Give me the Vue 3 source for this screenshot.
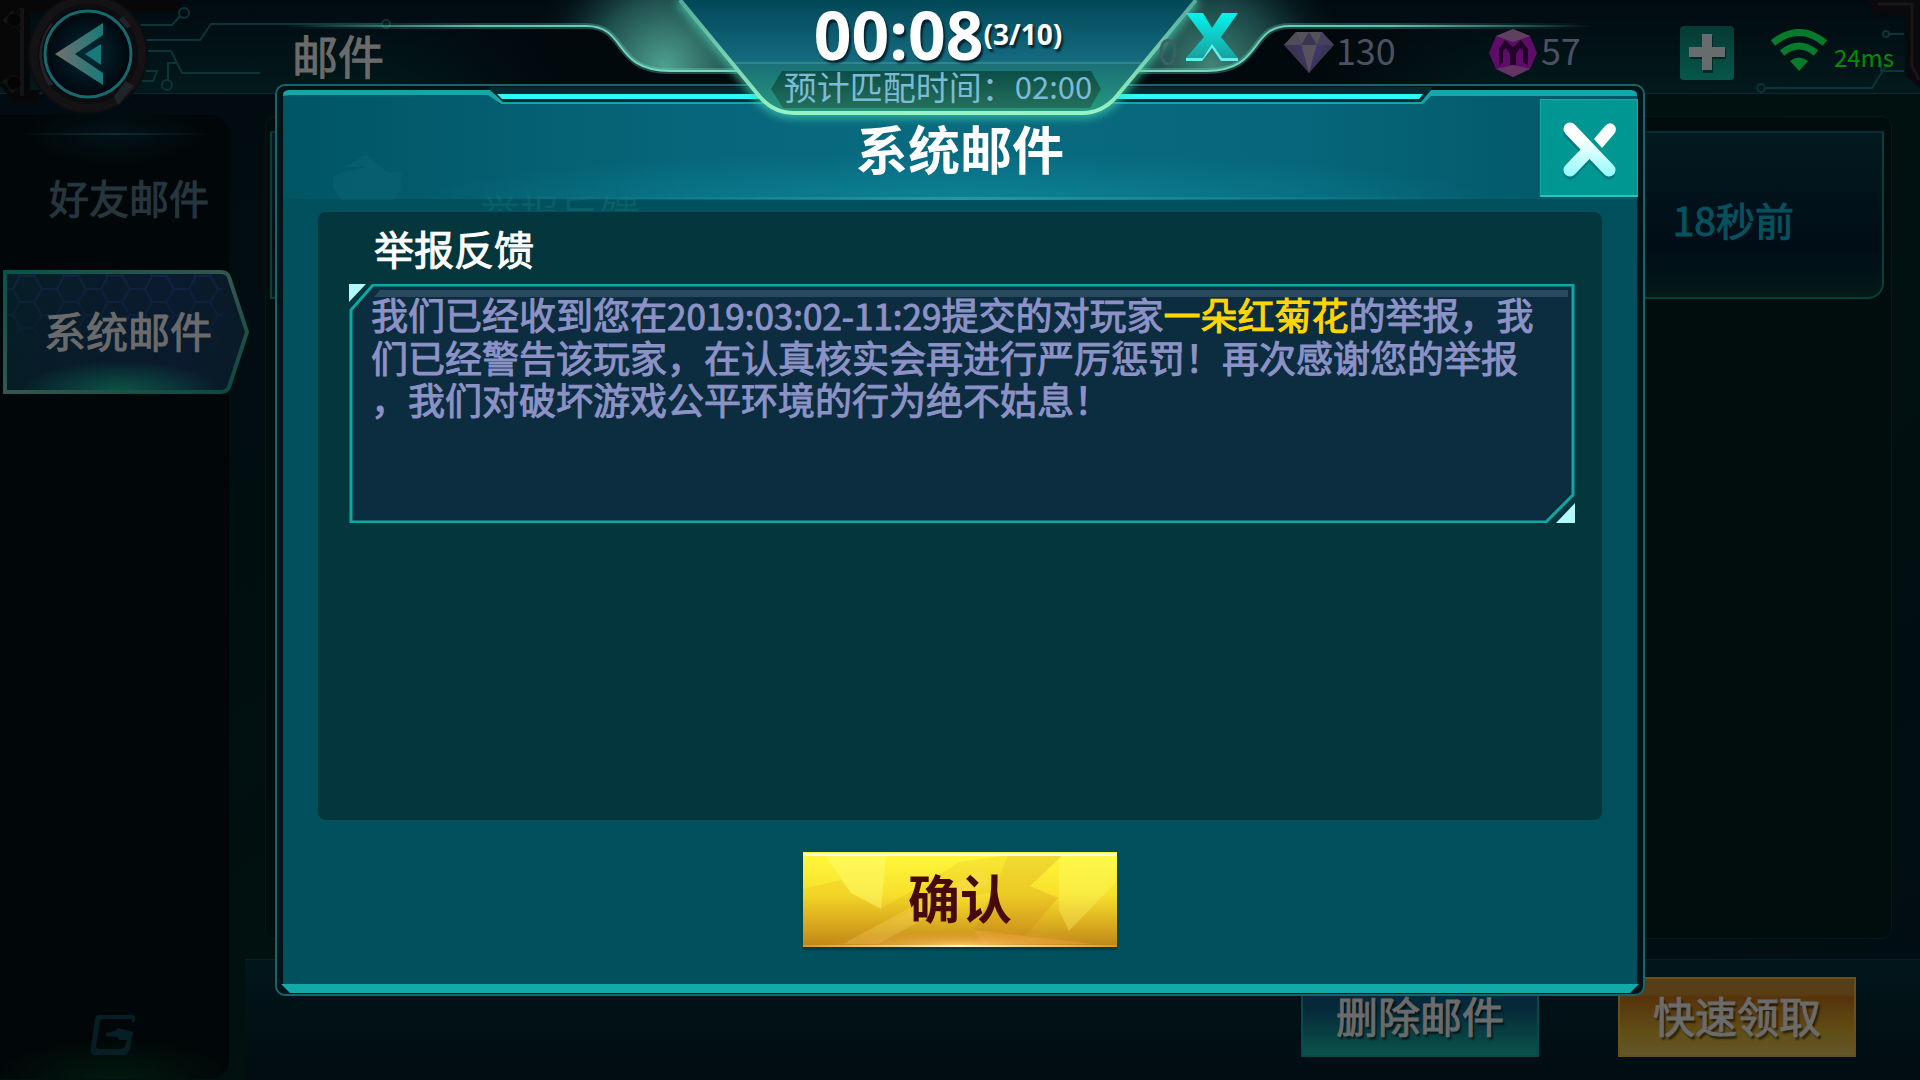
<script setup>
import { ref } from 'vue'

const abas = ['好友邮件', '系统邮件']
const abaAtiva = ref('系统邮件')

const mail = {
  title: '举报反馈',
  before: '我们已经收到您在',
  date: '2019:03:02-11:29',
  middle: '提交的对玩家',
  player: '一朵红菊花',
  after: '的举报，我们已经警告该玩家，在认真核实会再进行严厉惩罚！再次感谢您的举报，我们对破坏游戏公平环境的行为绝不姑息！'
}
</script>

<template>
  <div class="tela">
    <header class="topo">
      <svg class="circuito" viewBox="0 0 480 110" aria-hidden="true">
        <path d="M0 0H183L178 11H30V90H40L36 103H14L0 85Z" fill="#070708" />
        <path d="M22 8V96M4 22L14 12M4 80L14 92" stroke="#121517" stroke-width="4" fill="none" />
        <circle cx="14" cy="20" r="7" fill="#040405" stroke="#111" />
        <circle cx="14" cy="83" r="7" fill="#040405" stroke="#111" />
        <g fill="none" stroke="#0a3638" stroke-width="2">
          <path d="M130 25H172L180 16" />
          <circle cx="184" cy="13" r="5" />
          <path d="M145 40H200L211 24H381" />
          <circle cx="386" cy="24" r="4" />
          <path d="M145 51H171L182 73H260M176 63H168V80M146 71H157L153 81H142" />
          <circle cx="167" cy="85" r="5" />
        </g>
      </svg>

      <button class="voltar" aria-label="返回">
        <svg viewBox="0 0 124 124" aria-hidden="true">
          <defs>
            <linearGradient id="seta" x1="0" x2="1">
              <stop offset="0" stop-color="#746f70" />
              <stop offset="1" stop-color="#167a78" />
            </linearGradient>
            <radialGradient id="fundoSeta">
              <stop offset="0" stop-color="#042b38" />
              <stop offset="1" stop-color="#01060c" />
            </radialGradient>
          </defs>
          <circle cx="62" cy="62" r="60" fill="#0c0d0f" />
          <path d="M28 100A51 51 0 0 0 101 96" fill="none" stroke="#17484b" stroke-width="2" />
          <circle cx="62" cy="62" r="54" fill="none" stroke="#141214" stroke-width="8" />
          <path d="M33 37L25 31A52 52 0 0 0 23 94L31 91A60 60 0 0 1 33 37ZM97 24L105 34L99 37L92 29ZM100 89L108 94L92 113L88 104Z" fill="#20242a" />
          <circle cx="62" cy="62" r="46" fill="#060a0c" />
          <circle cx="62" cy="62" r="43" fill="url(#fundoSeta)" stroke="#16696f" stroke-width="3" />
          <path d="M77 31L29 62L77 93V81L49 62L77 43Z" fill="url(#seta)" />
          <path d="M75 52L59 62L75 73Z" fill="#167a78" />
        </svg>
      </button>

      <h1 class="topo-titulo">邮件</h1>

      <div class="moedas">
        <span class="moeda moeda-zero"><span>0</span></span>
        <span class="moeda">
          <svg class="diamante" viewBox="0 0 50 41" aria-hidden="true">
            <path d="M12 0H38L50 13L25 41L0 13Z" fill="#3a3650" />
            <path d="M12 0L17 13L25 0L33 13L38 0Z" fill="#55525a" />
            <path d="M17 13H33L25 41Z" fill="#57525c" />
            <path d="M0 13L12 0L17 13Z" fill="#514d58" />
            <path d="M50 13L38 0L33 13Z" fill="#45405c" />
            <path d="M8 13H17L25 41Z" fill="#3b3560" />
            <path d="M42 13H33L25 41Z" fill="#3d3666" />
          </svg>
          <span>130</span>
        </span>
        <span class="moeda moeda-gema">
          <svg class="gema" viewBox="0 0 48 48" aria-hidden="true">
            <path d="M24 0L41 7L48 24L41 40L24 48L7 40L0 24L7 7Z" fill="#5d0c68" />
            <path d="M24 0L41 7L24 13L7 7Z" fill="#5e415f" />
            <path d="M7 40L24 36L41 40L24 48Z" fill="#623562" />
            <path d="M10 37V20L16 11L24 18L32 11L39 20V37L34 33V22L31 19L27 25V36H21V25L17 19L14 22V33Z" fill="#230229" />
          </svg>
          <span>57</span>
        </span>
        <button class="mais" aria-label="添加">
          <svg viewBox="0 0 54 54" aria-hidden="true">
            <path d="M23 10H33V23H46V33H33V47H23V33H10V23H23Z" fill="#022a25" />
            <path d="M22 8H32V21H45V31H32V44H22V31H9V21H22Z" fill="#696c6e" />
          </svg>
        </button>
        <svg class="wifi" viewBox="0 0 58 42" aria-hidden="true">
          <g fill="none" stroke="#087a2c" stroke-width="7">
            <path d="M3 14Q29 -7 55 14" />
            <path d="M12 24Q29 10 46 24" />
          </g>
          <path d="M20 32Q29 25 38 32L29 42Z" fill="#087a2c" />
        </svg>
        <span class="ping">24ms</span>
      </div>

      <svg class="canto" viewBox="0 0 180 100" aria-hidden="true">
        <path d="M126 0H180V88L165 75V16H148L134 12Z" fill="#0a090b" />
        <path d="M138 4H172V66L179 80" fill="none" stroke="#1a1618" stroke-width="3" />
        <g fill="none" stroke="#0a3638" stroke-width="2">
          <circle cx="146" cy="34" r="3" />
          <path d="M149 34H164M141 61V71H164M147 64L132 88H26" />
          <circle cx="21" cy="88" r="4" />
        </g>
      </svg>
    </header>

    <main class="corpo">
      <nav class="lateral">
        <button
          v-for="aba in abas"
          :key="aba"
          class="aba"
          :class="{ ativa: aba === abaAtiva }"
          @click="abaAtiva = aba"
        >
          <svg v-if="aba === abaAtiva" viewBox="0 0 250 128" aria-hidden="true">
            <defs>
              <linearGradient id="abaBorda" x1="0" y1="0" x2="1" y2="1">
                <stop offset="0" stop-color="#07534a" />
                <stop offset="0.5" stop-color="#35564f" />
                <stop offset="1" stop-color="#07493f" />
              </linearGradient>
              <linearGradient id="abaFundo" x1="0" y1="0" x2="1" y2="0">
                <stop offset="0" stop-color="#061d26" />
                <stop offset="0.7" stop-color="#0b1a2e" />
                <stop offset="1" stop-color="#081b25" />
              </linearGradient>
              <radialGradient id="abaLuz" cx="0.5" cy="1" r="0.5">
                <stop offset="0" stop-color="#0c5446" />
                <stop offset="1" stop-color="#0c5446" stop-opacity="0" />
              </radialGradient>
              <pattern id="hex" width="44" height="26" patternUnits="userSpaceOnUse" patternTransform="translate(5 8)">
                <path d="M0 13H8L15 0H29L37 13H44M8 13L15 26H29L37 13" fill="none" stroke="#1b2859" stroke-width="2" />
              </pattern>
              <linearGradient id="some" x1="0" y1="0" x2="0" y2="1">
                <stop offset="0" stop-color="#fff" />
                <stop offset="0.7" stop-color="#000" />
              </linearGradient>
              <mask id="mascara"><rect width="250" height="128" fill="url(#some)" /></mask>
            </defs>
            <path d="M5 4H221Q227 4 229 9L247 64L229 119Q227 124 221 124H5Z" fill="url(#abaFundo)" />
            <rect x="5" y="4" width="218" height="100" fill="url(#hex)" opacity="0.6" mask="url(#mascara)" />
            <rect x="20" y="62" width="200" height="61" fill="url(#abaLuz)" />
            <path d="M5 4H221Q227 4 229 9L247 64L229 119Q227 124 221 124H5Z" fill="none" stroke="url(#abaBorda)" stroke-width="4" />
          </svg>
          <span>{{ aba }}</span>
        </button>
        <svg class="marca" viewBox="0 0 46 40" aria-hidden="true">
          <path d="M8 0H42Q46 0 45 6L42 8V4H13Q11 4 10 6L6 31Q6 34 9 34H30Q34 34 35 31L37 25H30L27 22L16 21V18L25 16L28 13L43 17L40 33Q39 40 33 40H5Q0 40 1 33L5 4Q6 0 8 0Z" fill="#071e26" />
        </svg>
      </nav>

      <section class="lista">
        <article class="item">
          <time class="item-tempo">18秒前</time>
        </article>
      </section>
    </main>

    <footer class="rodape">
      <button class="btn btn-apagar">删除邮件</button>
      <button class="btn btn-receber">快速领取</button>
    </footer>

    <div class="modal" role="dialog" aria-labelledby="modal-titulo">
      <svg class="moldura" viewBox="0 0 1370 912" preserveAspectRatio="none" aria-hidden="true">
        <defs>
          <linearGradient id="cabeca" x1="0" y1="0" x2="1" y2="0">
            <stop offset="0" stop-color="#005563" />
            <stop offset="0.3" stop-color="#07667b" />
            <stop offset="0.5" stop-color="#096a80" />
            <stop offset="0.75" stop-color="#07667b" />
            <stop offset="1" stop-color="#005563" />
          </linearGradient>
          <radialGradient id="brilho" cx="0.5" cy="1" r="0.5">
            <stop offset="0" stop-color="#0f8b9c" />
            <stop offset="1" stop-color="#0f8b9c" stop-opacity="0" />
          </radialGradient>
          <linearGradient id="linha" x1="0" x2="1">
            <stop offset="0.2" stop-color="#1e8d9c" stop-opacity="0" />
            <stop offset="0.5" stop-color="#2597a5" />
            <stop offset="0.88" stop-color="#1e8d9c" stop-opacity="0" />
          </linearGradient>
        </defs>
        <rect x="1" y="1" width="1368" height="910" rx="9" fill="#021318" stroke="#15656d" stroke-width="2" />
        <path d="M8 8H1362V901H8Z" fill="#00515d" />
        <path d="M8 11H1362V115H8Z" fill="url(#cabeca)" />
        <path d="M150 20H1220V115H150Z" fill="url(#brilho)" opacity="0.7" />
        <path d="M8 113H1362V116H8Z" fill="url(#linha)" />
        <!-- ghost of the mail row behind the panel -->
        <path d="M58 104V92L68 88L92 83H70L88 72L93 72L112 88H126V104L118 116H66Z" fill="#17717a" opacity="0.25" />
        <text class="fantasma" x="205" y="145">{{ mail.title }}</text>
        <path d="M214 3H1158L1147 20H224Z" fill="#032a33" />
        <path d="M8 12Q8 6 14 6H215L228 18H1146L1156 6H1356Q1362 6 1362 12H1156L1148 20H226L213 11H14Z" fill="#14a6a8" />
        <path d="M222 10H1148L1144 15H227Z" fill="#2afafb" />
        <path d="M6 900H1364L1355 909H15Z" fill="#14a9a9" />
      </svg>

      <div class="modal-topo">
        <h2 id="modal-titulo">系统邮件</h2>
        <button class="fechar" aria-label="关闭">
          <svg viewBox="0 0 96 96" aria-hidden="true">
            <defs>
              <linearGradient id="xis" x1="0" y1="22" x2="0" y2="77" gradientUnits="userSpaceOnUse">
                <stop offset="0.3" stop-color="#fff" />
                <stop offset="1" stop-color="#8ffcff" />
              </linearGradient>
            </defs>
            <g fill="none" stroke-width="13" stroke-linecap="round">
              <path d="M29 33L68 73M48 53L29 73" stroke="#057b7d" />
              <path d="M29 29L68 70M48 50L29 70" stroke="url(#xis)" />
            </g>
            <path d="M53 39L64 26Q69 21 73 25Q77 29 73 34L61 48Z" fill="#fff" />
          </svg>
        </button>
      </div>

      <div class="painel">
        <h3>{{ mail.title }}</h3>
        <div class="mensagem">
          <svg viewBox="0 0 1226 239" preserveAspectRatio="none" aria-hidden="true">
            <path d="M24 1H1224V211L1197 238H2V26Z" fill="#0c2c3f" stroke="#0fa8a1" stroke-width="3" />
            <path d="M31 6H1219V13H25Z" fill="#29495f" />
            <path d="M0 0H17L0 18ZM1226 219V239H1207Z" fill="#b2f8fd" />
          </svg>
          <p>{{ mail.before }}<span class="data">{{ mail.date }}</span>{{ mail.middle }}<span class="jogador">{{ mail.player }}</span>{{ mail.after }}</p>
        </div>
      </div>

      <button class="btn-confirmar">
        <svg viewBox="0 0 314 95" preserveAspectRatio="none" aria-hidden="true">
          <defs>
            <radialGradient id="ouroLuz" cx="0.5" cy="1" r="0.5">
              <stop offset="0" stop-color="#ffc868" />
              <stop offset="1" stop-color="#e8942c" stop-opacity="0" />
            </radialGradient>
            <linearGradient id="fio" x1="0" x2="1">
              <stop offset="0" stop-color="#d99a20" />
              <stop offset="0.5" stop-color="#fff8d8" />
              <stop offset="1" stop-color="#d99a20" />
            </linearGradient>
          </defs>
          <path d="M22 3H83L78 57L48 41Z" fill="#ffff80" opacity="0.4" />
          <path d="M0 37L38 28L48 41L78 57L157 10L205 3L190 40L120 55L40 92H0Z" fill="#d18a00" opacity="0.13" />
          <path d="M40 92L176 18L188 30L75 92Z" fill="#ffe070" opacity="0.25" />
          <path d="M205 3H260L227 34L255 46L215 92L171 78L190 40Z" fill="#c87a10" opacity="0.22" />
          <path d="M260 3H313V30L266 79L256 58V5Z" fill="#ffff70" opacity="0.3" />
          <path d="M171 78L290 92H180Z" fill="#ffb050" opacity="0.3" />
          <rect x="10" y="62" width="294" height="32" fill="url(#ouroLuz)" />
          <rect y="1" width="314" height="3" fill="#fffde0" />
          <rect y="93" width="314" height="2" fill="url(#fio)" />
        </svg>
        <span>确认</span>
      </button>
    </div>

    <div class="fila">
      <svg viewBox="286 0 1304 130" aria-hidden="true">
        <defs>
          <linearGradient id="asa" x1="286" x2="938" y1="0" y2="0" gradientUnits="userSpaceOnUse" spreadMethod="reflect">
            <stop offset="0" stop-color="#5cc0ae" stop-opacity="0" />
            <stop offset="0.3" stop-color="#5cc0ae" />
            <stop offset="0.6" stop-color="#74dcc4" />
          </linearGradient>
          <linearGradient id="sombra" x1="390" x2="938" y1="0" y2="0" gradientUnits="userSpaceOnUse" spreadMethod="reflect">
            <stop offset="0" stop-color="#01060a" stop-opacity="0" />
            <stop offset="0.3" stop-color="#01060a" stop-opacity="0.8" />
          </linearGradient>
          <radialGradient id="asaE" cx="665" cy="66" r="135" gradientUnits="userSpaceOnUse">
            <stop offset="0" stop-color="#4fa08f" />
            <stop offset="0.5" stop-color="#1f4f4e" />
            <stop offset="1" stop-color="#04171f" stop-opacity="0" />
          </radialGradient>
          <radialGradient id="asaD" cx="1211" cy="66" r="135" gradientUnits="userSpaceOnUse">
            <stop offset="0" stop-color="#4fa08f" stop-opacity="0.8" />
            <stop offset="0.5" stop-color="#1f4f4e" stop-opacity="0.8" />
            <stop offset="1" stop-color="#04171f" stop-opacity="0" />
          </radialGradient>
          <linearGradient id="corpoFila" x1="0" y1="0" x2="0" y2="1">
            <stop offset="0" stop-color="#014858" />
            <stop offset="0.52" stop-color="#15697e" />
            <stop offset="0.56" stop-color="#1a6f76" />
            <stop offset="1" stop-color="#279a80" />
          </linearGradient>
          <linearGradient id="borda" x1="0" y1="0" x2="0" y2="1">
            <stop offset="0" stop-color="#54a99d" />
            <stop offset="1" stop-color="#96f3c4" />
          </linearGradient>
          <linearGradient id="placa" x1="0" y1="0" x2="0" y2="1">
            <stop offset="0" stop-color="#0b4e49" />
            <stop offset="1" stop-color="#246f5b" />
          </linearGradient>
          <linearGradient id="xisFila" x1="0" y1="0" x2="0" y2="1">
            <stop offset="0" stop-color="#05f3ec" />
            <stop offset="1" stop-color="#1b9c9a" />
          </linearGradient>
          <filter id="luz" x="-10%" y="-30%" width="120%" height="160%">
            <feGaussianBlur stdDeviation="5" />
          </filter>
        </defs>
        <path d="M390 26H586C628 26 612 71 670 71H738L748 84H390ZM1486 26H1290C1248 26 1264 71 1206 71H1138L1128 84H1486Z" fill="url(#sombra)" />
        <path d="M430 0H680L738 71H670C612 71 628 26 586 26H430Z" fill="url(#asaE)" />
        <path d="M1446 0H1196L1138 71H1206C1264 71 1248 26 1290 26H1446Z" fill="url(#asaD)" />
        <path d="M286 26H586C628 26 612 71 670 71H738M1590 26H1290C1248 26 1264 71 1206 71H1138" fill="none" stroke="url(#asa)" stroke-width="6" opacity="0.3" />
        <path d="M286 26H586C628 26 612 71 670 71H738M1590 26H1290C1248 26 1264 71 1206 71H1138" fill="none" stroke="url(#asa)" stroke-width="2" />
        <path d="M680 0L760 97Q774 113 794 113H1082Q1102 113 1116 97L1196 0" fill="none" stroke="#4ad6b0" stroke-width="9" opacity="0.8" filter="url(#luz)" />
        <path d="M680 0L760 97Q774 113 794 113H1082Q1102 113 1116 97L1196 0Z" fill="url(#corpoFila)" />
        <path d="M733 63H1143" stroke="#2b8790" stroke-width="2" />
        <path d="M771 89L782 71H1091L1101 89L1090 108H783Z" fill="url(#placa)" />
        <path d="M680 0L760 97Q774 113 794 113H1082Q1102 113 1116 97L1196 0" fill="none" stroke="url(#borda)" stroke-width="4" />
        <path d="M1186 13H1203L1212 28L1222 13H1238L1221 37L1238 58V61H1221L1212 47L1202 61H1186V58L1204 37Z" fill="url(#xisFila)" />
        <path d="M1186 58H1203L1212 44L1222 58H1238V61H1221L1212 48L1202 61H1186Z" fill="#62f0ee" />
      </svg>
      <div class="fila-texto">
        <div class="relogio">00:08<small>(3/10)</small></div>
        <div class="estimativa">预计匹配时间：<span>02:00</span></div>
      </div>
    </div>
  </div>
</template>

<style>
body {
  margin: 0;
  background: #010d12;
}
</style>

<style scoped>
.tela {
  position: relative;
  min-height: 100vh;
  display: flex;
  flex-direction: column;
  overflow: hidden;
  background: linear-gradient(150deg, #010a12, #01110f 50%, #010d13);
  color: #6b6b6b;
  font-family: 'Noto Sans CJK SC', sans-serif;
  -webkit-text-stroke-width: 1px;
}

h1,
h2,
h3,
p {
  margin: 0;
  font-weight: 400;
}

button {
  border: 0;
  padding: 0;
  background: none;
  color: inherit;
  font: inherit;
  cursor: pointer;
}

svg {
  display: block;
}

/* top bar */
.topo {
  position: relative;
  height: 94px;
  box-sizing: border-box;
  border-bottom: 1px solid #062a2d;
  background: linear-gradient(#010a10, #02191b);
  display: flex;
  align-items: center;
}

.circuito {
  position: absolute;
  left: 0;
  top: 0;
  width: 480px;
  height: 110px;
}

.canto {
  position: absolute;
  right: 0;
  top: 0;
  width: 180px;
  height: 100px;
}

.voltar {
  position: relative;
  width: 124px;
  height: 124px;
  margin-left: 26px;
  margin-top: 14px;
  flex: none;
}

.topo-titulo {
  position: relative;
  margin-left: 142px;
  padding-top: 14px;
  font-size: 46px;
  line-height: 48px;
}

.moedas {
  position: relative;
  z-index: 1;
  flex: 1;
  display: flex;
  align-items: center;
  justify-content: flex-end;
  padding: 12px 26px 0 0;
}

.moeda {
  width: 205px;
  display: flex;
  align-items: center;
  gap: 2px;
  color: #4d5060;
  font-size: 36px;
  line-height: 40px;
  -webkit-text-stroke-width: 0;
}

.moeda > span {
  padding-bottom: 8px;
}

.moeda-zero {
  width: 126px;
  color: #3e6068;
}

.moeda-gema {
  width: 191px;
  gap: 4px;
}

.diamante {
  width: 50px;
  height: 41px;
}

.gema {
  width: 48px;
  height: 48px;
}

.mais {
  width: 54px;
  height: 54px;
  border-radius: 4px;
  background: linear-gradient(#053a34, #07564a);
}

.wifi {
  width: 58px;
  height: 42px;
  margin-left: 36px;
  margin-bottom: 6px;
}

.ping {
  margin-left: 6px;
  padding-top: 8px;
  color: #048b08;
  font-size: 24px;
  line-height: 28px;
  -webkit-text-stroke-width: 0;
}

/* background page */
.corpo {
  flex: 1;
  display: flex;
}

.lateral {
  width: 229px;
  flex: none;
  margin-top: 21px;
  margin-bottom: -120px;
  box-sizing: border-box;
  border-radius: 0 18px 18px 0;
  background:
    radial-gradient(90px 30px at 50% 20px, #021219, transparent),
    radial-gradient(120px 40px at 50% 100%, #02180f, transparent),
    #010708;
  display: flex;
  flex-direction: column;
}

.lateral::before {
  content: '';
  height: 2px;
  margin: 18px 20px 0;
  background: linear-gradient(90deg, transparent, #102a38, transparent);
}

.aba {
  position: relative;
  width: 250px;
  height: 128px;
  display: flex;
  align-items: center;
  padding: 0 0 4px 49px;
  box-sizing: border-box;
  color: #26363e;
  font-size: 40px;
  line-height: 48px;
}

.aba + .aba {
  margin-top: 5px;
}

.aba.ativa {
  padding-left: 44px;
  color: #6b6b6b;
  font-size: 42px;
}

.aba svg {
  position: absolute;
  inset: 0;
}

.aba span {
  position: relative;
}

.marca {
  width: 46px;
  height: 40px;
  margin: auto 0 24px 90px;
}

.lista {
  flex: 1;
  margin: 22px 28px 20px 36px;
  border: 1px solid #03191b;
  border-radius: 10px;
  background: #010c0d;
}

.item {
  height: 168px;
  margin: 14px 7px 0 4px;
  border: 2px solid #084038;
  border-top-color: #0a2b35;
  border-radius: 0 0 16px 0;
  box-sizing: border-box;
  background: linear-gradient(#021920, #010d16 70%, #02191a);
  display: flex;
  align-items: center;
  justify-content: flex-end;
  padding: 8px 88px 0 0;
}

.item-tempo {
  color: #07515f;
  font-size: 39px;
  line-height: 48px;
}

.rodape {
  height: 121px;
  margin-left: 245px;
  box-sizing: border-box;
  border-top: 1px solid #042227;
  background: linear-gradient(#02161b, #010c11);
  display: flex;
  justify-content: flex-end;
  gap: 79px;
  padding: 17px 64px 24px 0;
}

.btn {
  width: 238px;
  height: 80px;
  padding-bottom: 4px;
  font-size: 42px;
  line-height: 48px;
  text-shadow: 2px 3px 2px rgba(0, 0, 0, 0.6);
}

.btn-apagar {
  border: 2px solid #084a4b;
  background: linear-gradient(#06293a 40%, #0b534a);
}

.btn-receber {
  border: 2px solid #69501a;
  background: linear-gradient(#583e17 20%, #57330c 24%, #604e16 70%, #62582a);
}

/* mail dialog */
.modal {
  position: absolute;
  top: 84px;
  left: 50%;
  transform: translateX(-50%);
  width: 1370px;
  max-width: 94vw;
  box-sizing: border-box;
  padding-bottom: 49px;
  display: flex;
  flex-direction: column;
}

.moldura {
  position: absolute;
  width: 100%;
  height: 100%;
}

.fantasma {
  fill: #1f7d80;
  opacity: 0.3;
  font-size: 40px;
}

.modal-topo {
  position: relative;
  height: 115px;
  display: flex;
  align-items: center;
  justify-content: center;
  color: #fff;
}

.modal-topo h2 {
  padding-top: 13px;
  font-size: 52px;
  font-weight: 700;
  line-height: 56px;
  -webkit-text-stroke-width: 0;
}

.fechar {
  position: absolute;
  right: 7px;
  top: 15px;
  width: 98px;
  height: 98px;
  box-sizing: border-box;
  border: 1px solid #15aaa5;
  border-bottom: 2px solid #27c3c1;
  background: #009792;
}

.painel {
  position: relative;
  min-height: 610px;
  margin: 12px 42px 0;
  padding: 12px 27px 24px 31px;
  box-sizing: border-box;
  border: 1px solid #0a4f57;
  border-radius: 9px;
  background: #03363d;
}

.painel h3 {
  margin: 0 0 12px 25px;
  color: #fff;
  font-size: 40px;
  line-height: 48px;
}

.mensagem {
  position: relative;
  min-height: 239px;
  box-sizing: border-box;
  padding: 9px 29px 11px 22px;
}

.mensagem svg {
  position: absolute;
  left: 0;
  top: 0;
  width: 100%;
  height: 100%;
}

.mensagem p {
  position: relative;
  color: #8c92c6;
  font-size: 37px;
  line-height: 42px;
  line-break: anywhere;
}

.data {
  font-size: 35px;
}

.jogador {
  color: #ffd600;
}

.btn-confirmar {
  position: relative;
  align-self: center;
  width: 314px;
  height: 95px;
  margin-top: 31px;
  padding-bottom: 6px;
  background: linear-gradient(#fff93c, #f7e02c 45%, #dcae22 75%, #bb8518);
  box-shadow: 0 3px 2px #033b44;
  color: #470a0b;
  font-size: 52px;
  font-weight: 700;
  line-height: 56px;
  -webkit-text-stroke-width: 0;
}

.btn-confirmar svg {
  position: absolute;
  inset: 0;
  width: 100%;
  height: 100%;
}

.btn-confirmar span {
  position: relative;
}

/* matchmaking banner, hangs over the dialog */
.fila {
  position: absolute;
  top: 0;
  left: 0;
  right: 44px;
  display: flex;
  justify-content: center;
  pointer-events: none;
}

.fila > svg {
  width: 1304px;
  height: 130px;
  flex: none;
}

.fila-texto {
  position: absolute;
  top: 0;
  display: flex;
  flex-direction: column;
  align-items: center;
}

.relogio {
  height: 68px;
  display: flex;
  align-items: center;
  color: #fff;
  font-family: 'Open Sans', 'Noto Sans', sans-serif;
  font-size: 66px;
  font-weight: 700;
  line-height: 68px;
  text-shadow: 2px 3px 2px rgba(0, 20, 30, 0.8);
  -webkit-text-stroke-width: 0;
}

.relogio small {
  font-size: 28px;
}

.estimativa {
  display: flex;
  color: #7dbad6;
  font-size: 33px;
  line-height: 36px;
  -webkit-text-stroke-width: 0;
}

.estimativa span {
  font-size: 31px;
}
</style>
